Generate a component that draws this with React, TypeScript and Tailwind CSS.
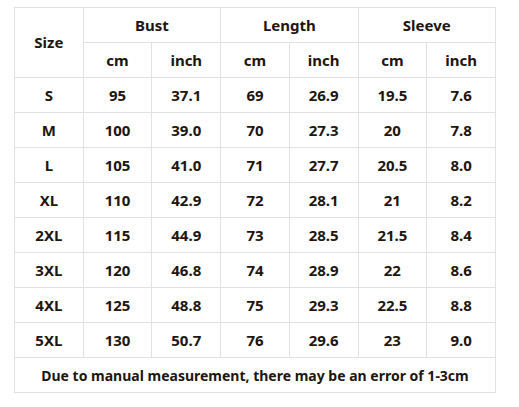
const rows = [
  ["S", "95", "37.1", "69", "26.9", "19.5", "7.6"],
  ["M", "100", "39.0", "70", "27.3", "20", "7.8"],
  ["L", "105", "41.0", "71", "27.7", "20.5", "8.0"],
  ["XL", "110", "42.9", "72", "28.1", "21", "8.2"],
  ["2XL", "115", "44.9", "73", "28.5", "21.5", "8.4"],
  ["3XL", "120", "46.8", "74", "28.9", "22", "8.6"],
  ["4XL", "125", "48.8", "75", "29.3", "22.5", "8.8"],
  ["5XL", "130", "50.7", "76", "29.6", "23", "9.0"],
];

const cell = "border border-[#e2e2e2] text-center align-middle p-0";

export default function App() {
  return (
    <div className="w-[519px] h-[407px] bg-white pt-[7px] pl-[14px] font-['Noto_Sans',sans-serif] font-bold text-[15px] text-[#21150f]">
      <table className="border-collapse table-fixed w-[482px]">
        <tbody>
          <tr className="h-[35px]">
            <td rowSpan={2} className={cell}>Size</td>
            <td colSpan={2} className={cell}>Bust</td>
            <td colSpan={2} className={cell}>Length</td>
            <td colSpan={2} className={cell}>Sleeve</td>
          </tr>
          <tr className="h-[35px]">
            {["cm", "inch", "cm", "inch", "cm", "inch"].map((u, i) => (
              <td key={i} className={cell}>{u}</td>
            ))}
          </tr>
          {rows.map((r) => (
            <tr key={r[0]} className="h-[35px]">
              {r.map((v, i) => (
                <td key={i} className={cell}>{v}</td>
              ))}
            </tr>
          ))}
          <tr className="h-[35px]">
            <td colSpan={7} className={`${cell} text-[14px]`}>
              Due to manual measurement, there may be an error of 1-3cm
            </td>
          </tr>
        </tbody>
      </table>
    </div>
  );
}
